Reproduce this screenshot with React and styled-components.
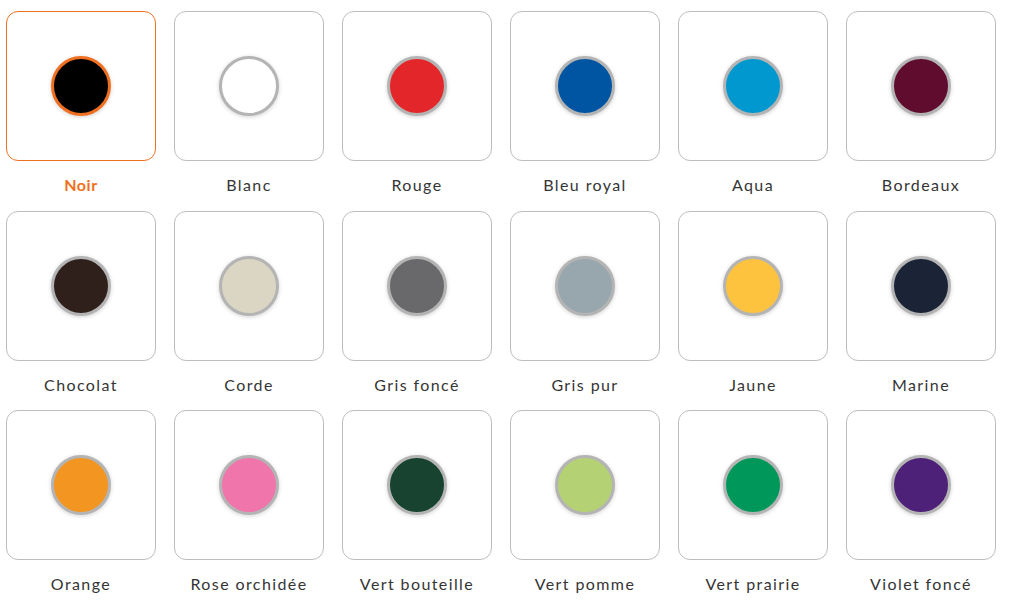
import React from "react";
import styled, { createGlobalStyle } from "styled-components";

const Global = createGlobalStyle`
  html, body { margin: 0; padding: 0; background: #fff; }
  body { font-family: "Lato", "Open Sans", sans-serif; }
`;

const Grid = styled.div`
  display: grid;
  grid-template-columns: repeat(6, 150px);
  column-gap: 18px;
  row-gap: 0;
  padding: 11px 0 0 6px;
`;

const Item = styled.div`
  display: flex;
  flex-direction: column;
  align-items: center;
  height: 199.5px;
`;

const Card = styled.div`
  box-sizing: border-box;
  width: 150px;
  height: 150px;
  border: 1px solid ${(p) => (p.$active ? "#f07022" : "#bdbdbd")};
  border-radius: 12px;
  display: flex;
  align-items: center;
  justify-content: center;
  background: #fff;
`;

const Swatch = styled.div`
  box-sizing: border-box;
  width: 60px;
  height: 60px;
  border-radius: 50%;
  background: ${(p) => p.$color};
  border: 3px solid ${(p) => (p.$active ? "#f07022" : "#b4b4b4")};
  box-shadow: 0 1px 4px rgba(0, 0, 0, 0.18);
`;

const Label = styled.div`
  margin-top: 15px;
  font-size: 16px;
  line-height: 18px;
  letter-spacing: ${(p) => (p.$active ? "0.6px" : "1.4px")};
  color: ${(p) => (p.$active ? "#f07022" : "#353535")};
  font-weight: ${(p) => (p.$active ? 700 : 400)};
`;

const colors = [
  ["Noir", "#000000"],
  ["Blanc", "#ffffff"],
  ["Rouge", "#e32629"],
  ["Bleu royal", "#0055a3"],
  ["Aqua", "#0098cf"],
  ["Bordeaux", "#5f0c2e"],
  ["Chocolat", "#30201c"],
  ["Corde", "#dbd5c3"],
  ["Gris foncé", "#69696b"],
  ["Gris pur", "#98a7ae"],
  ["Jaune", "#fdc33e"],
  ["Marine", "#1a2436"],
  ["Orange", "#f39521"],
  ["Rose orchidée", "#f075ab"],
  ["Vert bouteille", "#174330"],
  ["Vert pomme", "#b4d173"],
  ["Vert prairie", "#00985a"],
  ["Violet foncé", "#4d2177"],
];

export default function App() {
  return (
    <>
      <Global />
      <Grid>
        {colors.map(([name, c], i) => (
          <Item key={name}>
            <Card $active={i === 0}>
              <Swatch $color={c} $active={i === 0} />
            </Card>
            <Label $active={i === 0}>{name}</Label>
          </Item>
        ))}
      </Grid>
    </>
  );
}
